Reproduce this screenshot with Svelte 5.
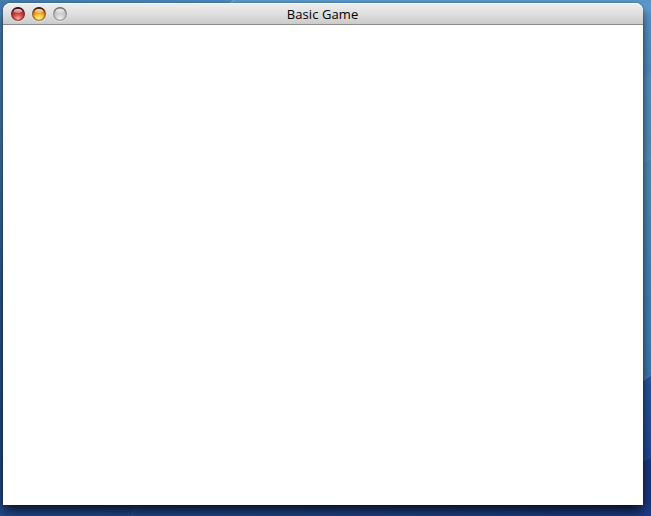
<script>
  const controls = [
    { name: 'close', edge: '#3a0c10', side: '#7d2a2c', top: '#8d3035', dark: '#bd2c30', mid: '#dc5552', glow: '#ffb5a8' },
    { name: 'minimize', edge: '#40180c', side: '#95602a', top: '#a4551c', dark: '#e58a14', mid: '#fbc83c', glow: '#fffc9c' },
    { name: 'zoom', edge: '#6c6c6c', side: '#8f8f8f', top: '#a8a8a8', dark: '#c2c2c2', mid: '#d4d4d4', glow: '#f0f0f0' }
  ];
</script>

<main class="desktop">
  <svg class="wallpaper" viewBox="0 0 651 516" aria-hidden="true">
    <defs>
      <linearGradient id="left" x1="0" y1="0" x2="0" y2="1">
        <stop offset="0" stop-color="#4e87b8" />
        <stop offset=".3" stop-color="#4577a8" />
        <stop offset=".6" stop-color="#2a5797" />
        <stop offset="1" stop-color="#20468a" />
      </linearGradient>
      <linearGradient id="right" x1="0" y1="0" x2="0" y2="1">
        <stop offset="0" stop-color="#5795ca" />
        <stop offset=".28" stop-color="#4a83b4" />
        <stop offset=".33" stop-color="#4f8bb8" />
        <stop offset=".75" stop-color="#3b7ab2" />
      </linearGradient>
      <linearGradient id="lower" x1="0" y1="0" x2="0" y2="1">
        <stop offset="0" stop-color="#27569e" />
        <stop offset="1" stop-color="#1d3e89" />
      </linearGradient>
      <linearGradient id="top">
        <stop offset="0" stop-color="#447bac" />
        <stop offset=".35" stop-color="#4b88bd" />
        <stop offset="1" stop-color="#5c99cc" />
      </linearGradient>
      <linearGradient id="bottom">
        <stop offset="0" stop-color="#24498f" />
        <stop offset=".45" stop-color="#22478a" />
        <stop offset="1" stop-color="#1e3a84" />
      </linearGradient>
    </defs>
    <path fill="url(#left)" d="M0 0H340V516H0z" />
    <path fill="url(#right)" d="M340 0H651V516H340z" />
    <path fill="url(#top)" d="M0 0H651V12H0z" />
    <path fill="#5996c7" d="M233 0H651V3H229z" />
    <path stroke="#8ab3d4" stroke-width=".9" d="M229 4L235 0" />
    <path fill="#5f9dc8" opacity=".35" d="M642 79L651 73V160L642 164z" />
    <path fill="url(#lower)" d="M640 382L651 375V516H640z" />
    <path stroke="#548db8" d="M640 383L651 375" />
    <path fill="#1b377c" d="M640 462L651 459V516H640z" />
    <path fill="url(#bottom)" d="M0 504H651V516H0z" />
    <path stroke="#35609a" stroke-width=".6" d="M130 516L140 505M0 315L3 310" />
  </svg>

  <section class="window">
    <header>
      <div class="controls">
        {#each controls as c}
          <svg width="16" height="16" viewBox="0 0 16 16" role="img" aria-label={c.name}>
            <defs>
              <linearGradient id={c.name + '-rim'} x1="0" y1="0" x2="0" y2="1">
                <stop offset="0" stop-color={c.edge} />
                <stop offset=".55" stop-color={c.side} />
                <stop offset="1" stop-color={c.side} stop-opacity=".75" />
              </linearGradient>
              <radialGradient id={c.name + '-fill'} cx=".5" cy=".88" r=".9">
                <stop offset="0" stop-color={c.glow} />
                <stop offset=".35" stop-color={c.mid} />
                <stop offset=".62" stop-color={c.dark} />
                <stop offset="1" stop-color={c.top} />
              </radialGradient>
              <linearGradient id={c.name + '-shine'} x1="0" y1="0" x2="0" y2="1">
                <stop offset="0" stop-color="#fff" stop-opacity=".8" />
                <stop offset="1" stop-color="#fff" stop-opacity=".25" />
              </linearGradient>
            </defs>
            <circle cx="8" cy="8.8" r="6.9" fill="none" stroke="#fff" stroke-opacity=".35" />
            <circle cx="8" cy="8" r="6.4" fill={`url(#${c.name}-fill)`} stroke={`url(#${c.name}-rim)`} stroke-width="1.2" />
            {#if c.name !== 'zoom'}
              <path d="M3.4 4.1Q8 .2 12.6 4.1" fill="none" stroke={c.edge} stroke-width="1.3" opacity=".7" />
            {/if}
            <ellipse cx="8" cy="5" rx="4.2" ry="2.1" fill={`url(#${c.name}-shine)`} />
          </svg>
        {/each}
      </div>
      <h1>Basic Game</h1>
    </header>
    <div class="content"></div>
  </section>
</main>

<style>
  :global(body) {
    margin: 0;
  }

  .desktop {
    position: relative;
    box-sizing: border-box;
    width: 651px;
    height: 516px;
    padding: 3px 8px 11px 3px;
    overflow: hidden;
    background: #24508f;
  }

  .wallpaper {
    position: absolute;
    inset: 0;
    width: 651px;
    height: 516px;
  }

  .window {
    position: relative;
    display: flex;
    flex-direction: column;
    width: 640px;
    height: 502px;
    border-radius: 8px 8px 0 0;
    background: white;
    box-shadow: 0 7px 12px -1px rgb(0 0 0 / 75%), 0 0 2px rgb(0 0 0 / 30%);
  }

  header {
    display: grid;
    grid-template-columns: 72px 1fr 72px;
    align-items: center;
    box-sizing: border-box;
    height: 22px;
    flex: none;
    border-bottom: 1px solid #8b8b8b;
    border-radius: 8px 8px 0 0;
    background: linear-gradient(#eeeeee, #e1e1e1 45%, #cbcbcb);
    box-shadow: inset 0 1px #f8f8f8;
  }

  .controls {
    display: flex;
    gap: 5px;
    padding: 1px 0 0 7px;
  }

  .controls svg {
    display: block;
    flex: none;
  }

  h1 {
    margin: 1px 1px 0 0;
    color: #000;
    font: 400 13px/18px "Lucida Grande", "Open Sans", "DejaVu Sans", sans-serif;
    letter-spacing: 0.1px;
    text-align: center;
    white-space: nowrap;
  }

  .content {
    flex: 1;
    background: #fff;
  }
</style>
